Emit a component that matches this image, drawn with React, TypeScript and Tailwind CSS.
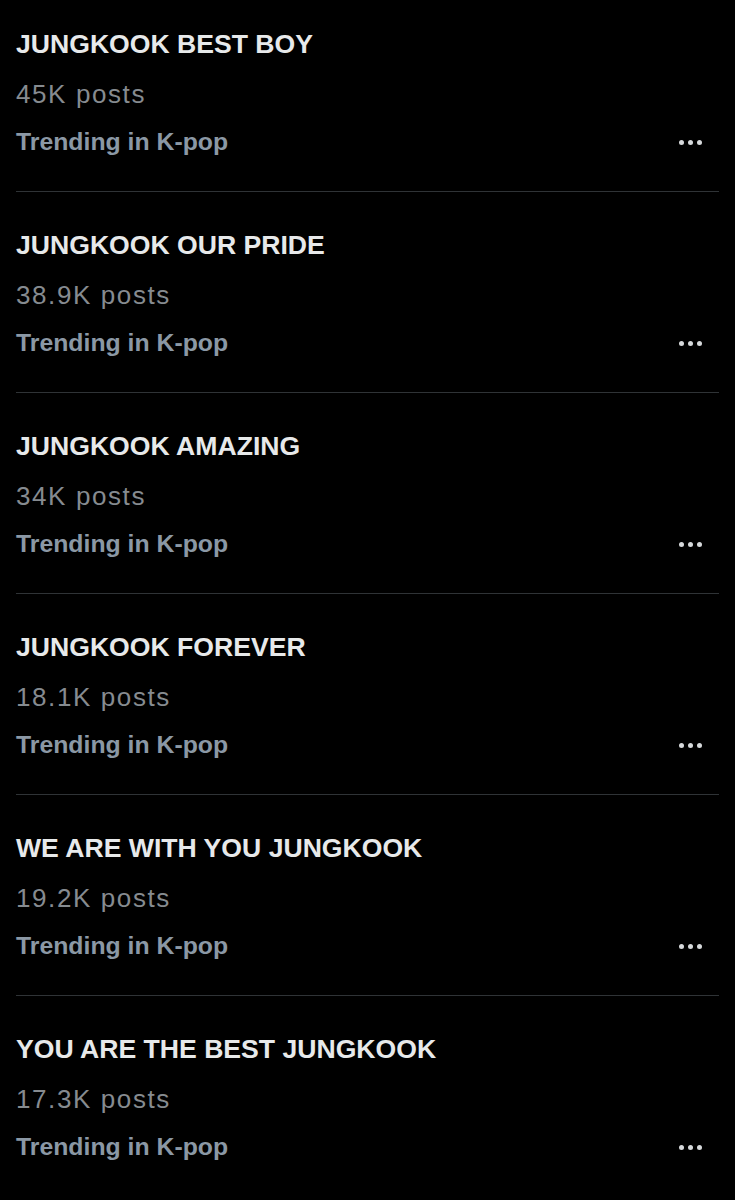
import React from "react";

const trends = [
  { title: "JUNGKOOK BEST BOY", posts: "45K posts" },
  { title: "JUNGKOOK OUR PRIDE", posts: "38.9K posts" },
  { title: "JUNGKOOK AMAZING", posts: "34K posts" },
  { title: "JUNGKOOK FOREVER", posts: "18.1K posts" },
  { title: "WE ARE WITH YOU JUNGKOOK", posts: "19.2K posts" },
  { title: "YOU ARE THE BEST JUNGKOOK", posts: "17.3K posts" },
];

function Dots() {
  return (
    <div className="flex items-center gap-[4px]">
      <span className="block w-[5px] h-[5px] rounded-full bg-[#d6d9db]" />
      <span className="block w-[5px] h-[5px] rounded-full bg-[#d6d9db]" />
      <span className="block w-[5px] h-[5px] rounded-full bg-[#d6d9db]" />
    </div>
  );
}

export default function App() {
  return (
    <div
      className="w-[735px] h-[1200px] bg-black overflow-hidden"
      style={{ fontFamily: '"Liberation Sans", Arial, sans-serif' }}
    >
      {trends.map((t, i) => (
        <div
          key={i}
          className={`mx-[16px] ${i === 0 ? "pt-[19px]" : "pt-[28px]"} pb-[26px] ${
            i < trends.length - 1 ? "border-b border-[#2f3336]" : ""
          }`}
        >
          <div className="leading-[50px] text-[26.6px] font-bold text-[#e7e9ea] whitespace-nowrap">
            {t.title}
          </div>
          <div className="leading-[50px] text-[26px] text-[#868b90] tracking-[1.6px] whitespace-nowrap">
            {t.posts}
          </div>
          <div className="flex items-center justify-between h-[46px] pr-[17px]">
            <span className="text-[24.8px] font-bold text-[#8b98a5] leading-[46px]">
              Trending in K-pop
            </span>
            <Dots />
          </div>
        </div>
      ))}
    </div>
  );
}
